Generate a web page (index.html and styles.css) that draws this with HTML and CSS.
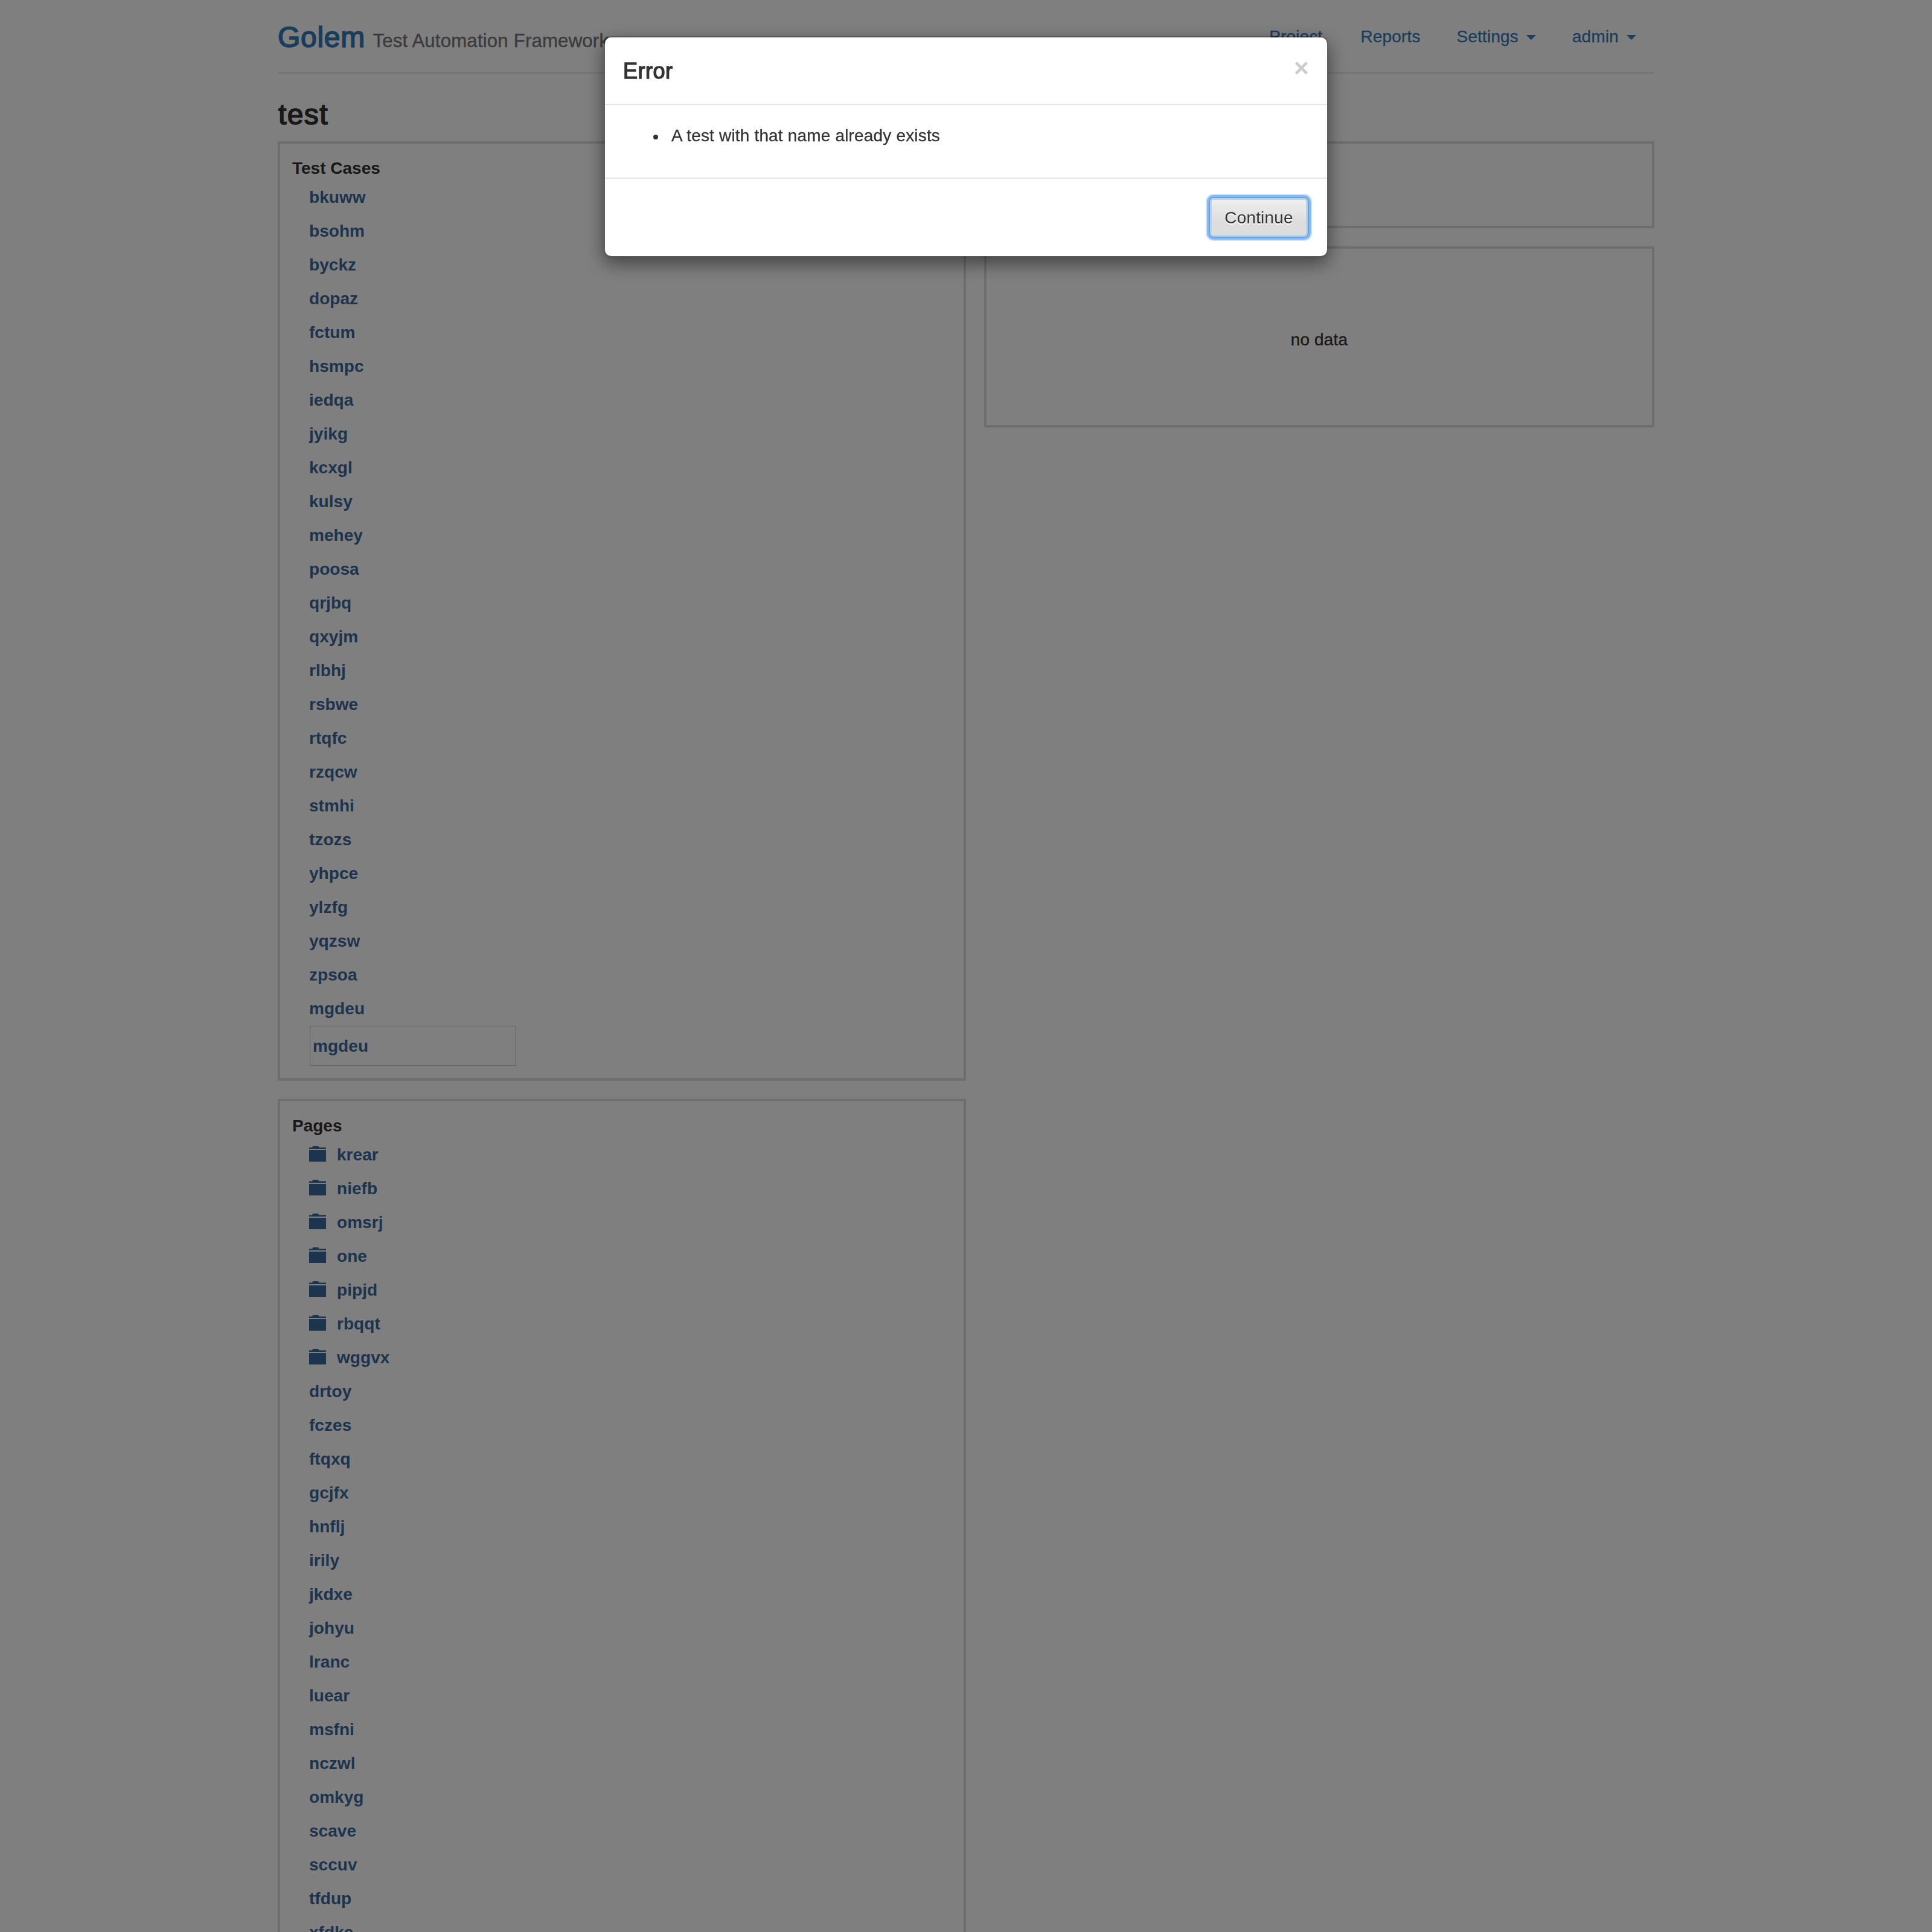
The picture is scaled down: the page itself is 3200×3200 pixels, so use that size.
FILE: index.html
```html
<!DOCTYPE html>
<html lang="en">
<head>
<meta charset="utf-8">
<title>Golem</title>
<link rel="stylesheet" href="styles.css">
</head>
<body>
<svg width="0" height="0" class="sprite"><symbol id="folder" viewBox="0 0 28 26"><path d="M0 5V2.500H5Q5.500 0 7.500 0H14Q16 0 16.500 2.500H28V5ZM0 7H28V26H0Z"/></symbol></svg>
<div class="container">
  <header class="header">
    <h3 class="brand"><a>Golem</a> <small>Test Automation Framework</small></h3>
    <nav class="nav">
      <a>Project</a>
      <a>Reports</a>
      <a>Settings<span class="caret"></span></a>
      <a>admin<span class="caret"></span></a>
    </nav>
  </header>
  <h3 class="project">test</h3>
  <div class="columns">
    <div class="column">
      <section class="panel">
        <h4>Test Cases</h4>
        <ul class="tree">
          <li>bkuww</li><li>bsohm</li><li>byckz</li><li>dopaz</li><li>fctum</li>
          <li>hsmpc</li><li>iedqa</li><li>jyikg</li><li>kcxgl</li><li>kulsy</li>
          <li>mehey</li><li>poosa</li><li>qrjbq</li><li>qxyjm</li><li>rlbhj</li>
          <li>rsbwe</li><li>rtqfc</li><li>rzqcw</li><li>stmhi</li><li>tzozs</li>
          <li>yhpce</li><li>ylzfg</li><li>yqzsw</li><li>zpsoa</li><li>mgdeu</li>
          <li class="new"><input type="text" value="mgdeu"></li>
        </ul>
      </section>
      <section class="panel">
        <h4>Pages</h4>
        <ul class="tree">
          <li><svg><use href="#folder"/></svg>krear</li>
          <li><svg><use href="#folder"/></svg>niefb</li>
          <li><svg><use href="#folder"/></svg>omsrj</li>
          <li><svg><use href="#folder"/></svg>one</li>
          <li><svg><use href="#folder"/></svg>pipjd</li>
          <li><svg><use href="#folder"/></svg>rbqqt</li>
          <li><svg><use href="#folder"/></svg>wggvx</li>
          <li>drtoy</li><li>fczes</li><li>ftqxq</li><li>gcjfx</li><li>hnflj</li>
          <li>irily</li><li>jkdxe</li><li>johyu</li><li>lranc</li><li>luear</li>
          <li>msfni</li><li>nczwl</li><li>omkyg</li><li>scave</li><li>sccuv</li>
          <li>tfdup</li><li>xfdke</li>
        </ul>
      </section>
    </div>
    <div class="column">
      <section class="panel summary"></section>
      <section class="panel chart">no data</section>
    </div>
  </div>
</div>
<div class="backdrop">
  <div class="modal">
    <div class="modal-header"><h4>Error</h4><span class="close">×</span></div>
    <div class="modal-body"><ul><li>A test with that name already exists</li></ul></div>
    <div class="modal-footer"><button>Continue</button></div>
  </div>
</div>
</body>
</html>
```
FILE: styles.css
```css
* { box-sizing: border-box; }
html, body { height: 3200px; overflow: hidden; }
body {
  margin: 0;
  background: #fff;
  color: #333;
  font: 28px/40px "Liberation Sans", Arial, sans-serif;
  letter-spacing: .17px;
}
h3, h4, ul { margin: 0; padding: 0; }
.sprite { position: absolute; }
.container { width: 2280px; margin: 0 auto; }
.header {
  display: flex;
  justify-content: space-between;
  align-items: flex-start;
  height: 122px;
  border-bottom: 2px solid #e5e5e5;
}
.brand {
  padding-top: 32px;
  font-size: 48px;
  font-weight: 400;
  line-height: 60px;
  color: #337ab7;
  white-space: nowrap;
}
.brand a { letter-spacing: .7px; -webkit-text-stroke: 1.7px #337ab7; }
.brand small { margin-left: -1px; font-size: 31.2px; color: #777; -webkit-text-stroke: .4px #777; }
.nav { display: flex; padding-top: 41px; }
.nav a {
  display: flex;
  align-items: center;
  padding: 0 30px;
  color: #337ab7;
  letter-spacing: .15px;
  -webkit-text-stroke: .3px #337ab7;
}
.nav a:first-child { padding-right: 33px; }
.caret {
  margin: 2px 0 0 13px;
  border-top: 8px solid #337ab7;
  border-left: 8px solid transparent;
  border-right: 8px solid transparent;
}
.project {
  height: 112px;
  padding: 38px 0 0 1px;
  font-size: 48px;
  font-weight: 400;
  line-height: 60px;
  letter-spacing: 1.4px;
  -webkit-text-stroke: 1.7px #333;
}
.columns { display: grid; grid-template-columns: 1140px 1110px; gap: 30px; align-items: start; }
.column { display: flex; flex-direction: column; gap: 30px; }
.panel { border: 4px solid #ddd; padding: 20px; }
.panel h4 { height: 40px; font-size: 28px; line-height: 42px; letter-spacing: 0; }
.summary { height: 144px; }
.chart { display: flex; align-items: center; justify-content: center; height: 300px; padding-top: 30px; -webkit-text-stroke: .3px #333; }
.tree {
  list-style: none;
  padding-left: 28px;
  font-weight: 700;
  line-height: 58px;
  letter-spacing: .05px;
  color: #38689a;
}
.tree li { display: flex; height: 56px; }
.tree svg { width: 28px; height: 26px; margin: 14px 18px 0 0; fill: #38689a; }
.tree .new { height: 68px; align-items: center; padding-left: 1px; }
.tree input {
  width: 342px;
  height: 66px;
  border: 1px solid #bbb;
  padding: 2px 4px 0;
  background: #fff;
  font: inherit;
  letter-spacing: inherit;
  color: inherit;
}
.backdrop { position: fixed; inset: 0; padding-top: 60px; background: rgba(0, 0, 0, .5); }
.modal {
  width: 1200px;
  margin: 0 auto;
  background: #fff;
  background-clip: padding-box;
  border: 2px solid rgba(0, 0, 0, .2);
  border-radius: 12px;
  box-shadow: 0 10px 30px rgba(0, 0, 0, .5);
}
.modal-header {
  display: flex;
  justify-content: space-between;
  padding: 30px;
  border-bottom: 2px solid #e5e5e5;
}
.modal-header h4 {
  height: 50px;
  font-size: 36px;
  font-weight: 400;
  line-height: 52px;
  letter-spacing: .5px;
  -webkit-text-stroke: 1.4px #333;
}
.close { font-size: 42px; font-weight: 700; line-height: 42px; color: #ccc; }
.modal-body { padding: 30px 30px 50px; }
.modal-body ul { padding-left: 50px; list-style: none; }
.modal-body li {
  display: flex;
  align-items: center;
  gap: 22px;
  height: 40px;
  padding-top: 2px;
  line-height: 40px;
  -webkit-text-stroke: .3px #333;
}
.modal-body li::before { content: ""; width: 8px; height: 8px; margin-top: 3px; border-radius: 50%; background: #333; }
.modal-footer { display: flex; justify-content: flex-end; padding: 30px; border-top: 2px solid #e5e5e5; }
button {
  width: 166px;
  height: 68px;
  padding: 1px 0 0;
  border: 2px solid #69a0dc;
  border-radius: 8px;
  background: linear-gradient(#f0f0f0, #ddd 60%);
  box-shadow: inset 0 0 0 3px #bcd2e9, 0 0 0 3px #82bbf9, 0 0 0 5px #cfe4fc;
  color: #333;
  font: inherit;
  letter-spacing: .17px;
  text-shadow: 0 2px 0 #fff;
}
```
